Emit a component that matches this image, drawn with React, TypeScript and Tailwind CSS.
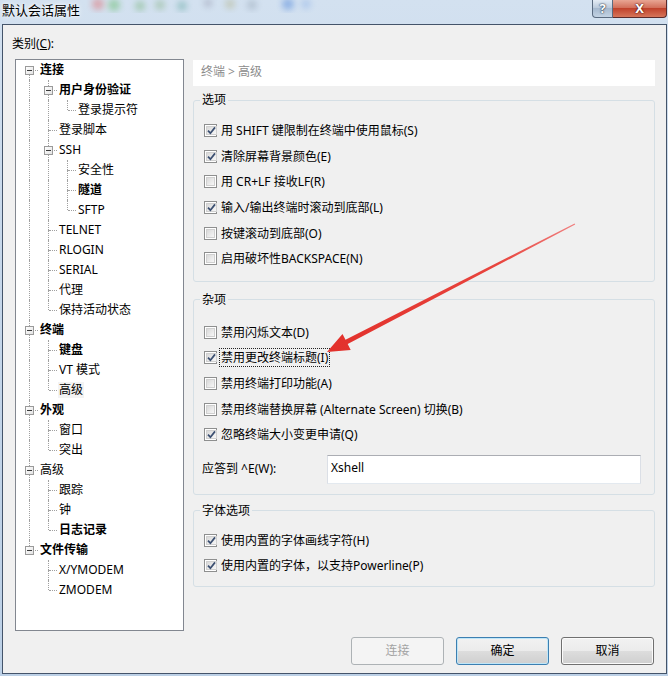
import React from 'react'

type Node = [string, number, boolean, boolean]

const tree: Node[] = [
  ['连接', 0, true, true],
  ['用户身份验证', 1, true, true],
  ['登录提示符', 2, false, false],
  ['登录脚本', 1, false, false],
  ['SSH', 1, false, true],
  ['安全性', 2, false, false],
  ['隧道', 2, true, false],
  ['SFTP', 2, false, false],
  ['TELNET', 1, false, false],
  ['RLOGIN', 1, false, false],
  ['SERIAL', 1, false, false],
  ['代理', 1, false, false],
  ['保持活动状态', 1, false, false],
  ['终端', 0, true, true],
  ['键盘', 1, true, false],
  ['VT 模式', 1, false, false],
  ['高级', 1, false, false],
  ['外观', 0, true, true],
  ['窗口', 1, false, false],
  ['突出', 1, false, false],
  ['高级', 0, false, true],
  ['跟踪', 1, false, false],
  ['钟', 1, false, false],
  ['日志记录', 1, true, false],
  ['文件传输', 0, true, true],
  ['X/YMODEM', 1, false, false],
  ['ZMODEM', 1, false, false],
]

function hasNext(i: number) {
  const lv = tree[i][1]
  for (let j = i + 1; j < tree.length; j++) {
    if (tree[j][1] < lv) return false
    if (tree[j][1] === lv) return true
  }
  return false
}

function TreeRow({ i }: { i: number }) {
  const [label, level, bold, expander] = tree[i]
  const cols = []
  for (let c = 0; c <= level; c++) {
    let cont = false
    if (c < level) {
      for (let k = i - 1; k >= 0; k--) {
        if (tree[k][1] === c) {
          cont = hasNext(k)
          break
        }
      }
    }
    cols.push(
      <div key={c} className="relative w-[19px] h-full shrink-0">
        {c < level && cont && (
          <span className="absolute left-[9px] top-0 bottom-0 border-l border-dotted border-[#a0a0a0]" />
        )}
        {c === level && (
          <>
            {i !== 0 && (
              <span className="absolute left-[9px] top-0 h-[10px] border-l border-dotted border-[#a0a0a0]" />
            )}
            {hasNext(i) && (
              <span className="absolute left-[9px] top-[10px] bottom-0 border-l border-dotted border-[#a0a0a0]" />
            )}
            <span className="absolute left-[10px] right-[1px] top-[10px] border-t border-dotted border-[#a0a0a0]" />
            {expander && (
              <span className="absolute left-[5px] top-[6px] w-[9px] h-[9px] border border-[#9a9a9a] bg-[linear-gradient(135deg,#ffffff,#e2e2e2)] flex items-center justify-center">
                <span className="w-[5px] h-[1px] bg-[#3a3a3a]" />
              </span>
            )}
          </>
        )}
      </div>
    )
  }
  const selected = i === 16
  return (
    <div className="flex h-[20px] items-center pl-[4px]">
      {cols}
      <span
        className={`px-[1px] leading-[16px] whitespace-nowrap text-black ${bold ? 'font-bold' : ''} ${selected ? 'bg-[#f3f3f3]' : ''}`}
      >
        {label}
      </span>
    </div>
  )
}

function Check({ checked }: { checked: boolean }) {
  return (
    <span className="w-[13px] h-[13px] shrink-0 border border-[#8e8f8f] bg-white p-[1px] flex">
      <span className="flex-1 border border-[#d0d0d0] bg-[linear-gradient(135deg,#d9d9d9,#f7f7f7)] flex items-center justify-center">
        {checked && (
          <svg width="9" height="9" viewBox="0 0 9 9">
            <path d="M1 4.6 L3.4 7.2 L8 1.4" fill="none" stroke="#3b4f71" strokeWidth="1.7" />
          </svg>
        )}
      </span>
    </span>
  )
}

function Row({ checked, label, focus }: { checked: boolean; label: string; focus?: boolean }) {
  return (
    <div className="h-[25.6px] flex items-center gap-[2px]">
      <Check checked={checked} />
      <span
        className={`leading-[17px] whitespace-nowrap px-[1px] ${focus ? 'border border-dotted border-[#222]' : 'border border-transparent'}`}
      >
        {label}
      </span>
    </div>
  )
}

function Group({ title, children, className }: { title: string; children: React.ReactNode; className?: string }) {
  return (
    <fieldset className={`border border-[#d5dfe5] rounded-[3px] pl-[10px] pr-[10px] ${className ?? ''}`}>
      <legend className="ml-[-4px] px-[2px] leading-[16px]">{title}</legend>
      {children}
    </fieldset>
  )
}

function Btn({ label, kind }: { label: string; kind: 'normal' | 'default' | 'disabled' }) {
  const cls =
    kind === 'disabled'
      ? 'border-[#adb2b5] bg-[#f4f4f4] text-[#a3a3a3]'
      : kind === 'default'
        ? 'border-[#3c7fb1] bg-[linear-gradient(#f2f2f2_0%,#ebebeb_50%,#dddddd_50%,#cfcfcf_100%)] shadow-[inset_0_0_0_1px_#bfe6f8] text-black'
        : 'border-[#707070] bg-[linear-gradient(#f2f2f2_0%,#ebebeb_50%,#dddddd_50%,#cfcfcf_100%)] shadow-[inset_0_0_0_1px_#fbfbfb] text-black'
  return (
    <div className={`w-[93px] h-[28px] rounded-[3px] border flex items-center justify-center ${cls}`}>{label}</div>
  )
}

export default function App() {
  return (
    <div className="relative w-[668px] h-[676px] flex flex-col bg-[linear-gradient(180deg,#d3e1f0,#c6d7ea_40%,#bcd0e6)] overflow-hidden font-['Noto_Sans','Noto_Sans_CJK_SC',sans-serif] text-[12px] text-black">
      {/* title bar */}
      <div className="relative h-[24px] shrink-0 flex items-start">
        <svg className="absolute left-0 top-0" width="668" height="24">
          <defs>
            <filter id="bl">
              <feGaussianBlur stdDeviation="3" />
            </filter>
          </defs>
          <g filter="url(#bl)" opacity="0.45">
            <circle cx="98" cy="4" r="6" fill="#e06060" />
            <circle cx="114" cy="5" r="6" fill="#58b85a" />
            <circle cx="140" cy="6" r="5" fill="#6cae6a" />
            <circle cx="160" cy="5" r="5" fill="#7fae7a" />
            <circle cx="182" cy="6" r="5" fill="#5aa39a" />
            <circle cx="208" cy="3" r="4" fill="#8a8aa0" />
            <circle cx="230" cy="4" r="5" fill="#b0b080" />
            <circle cx="252" cy="5" r="5" fill="#90a0b0" />
            <circle cx="288" cy="4" r="6" fill="#3d7ad8" />
            <circle cx="306" cy="4" r="5" fill="#8ab0e8" />
          </g>
        </svg>
        <span className="relative ml-[2px] mt-[1px] leading-[18px] text-[13px] [text-shadow:0_0_6px_#ffffff,0_0_3px_#ffffff]">
          默认会话属性
        </span>
        <div className="ml-auto mr-[1px] flex relative">
          <div className="w-[21px] h-[18px] rounded-bl-[4px] border border-t-0 border-[#5a6b80] bg-[linear-gradient(#e4ecf5,#b8c8da_50%,#a6b9cf_50%,#c3d3e4)] flex items-center justify-center text-white font-bold text-[13px] [text-shadow:0_0_2px_#1d2b3d,0_0_1px_#1d2b3d]">
            ?
          </div>
          <div className="w-[54px] h-[18px] rounded-br-[4px] border border-t-0 border-l-0 border-[#5a2a2a] bg-[linear-gradient(#e8a593,#d06a55_50%,#c0422c_50%,#d6755a)] flex items-center justify-center text-white font-bold text-[13px] [text-shadow:0_0_2px_#4a1010,0_0_1px_#4a1010]">
            X
          </div>
        </div>
      </div>

      {/* body */}
      <div className="flex-1 ml-[2px] mr-[1px] mb-[2px] border border-[#44546a] bg-[#f0f0f0] flex flex-col">
        <div className="flex pt-[11px] pl-[9px] gap-[9px]">
          <div className="w-[172px] flex flex-col">
            <div className="leading-[16px]">
              类别(<span className="underline">C</span>):
            </div>
            <div className="mt-[7px] ml-[3px] w-[169px] h-[572px] border border-[#828790] bg-white pt-0">
              {tree.map((_, i) => (
                <TreeRow key={i} i={i} />
              ))}
            </div>
          </div>

          <div className="w-[462px] mt-[24px] flex flex-col">
            <div className="h-[26px] bg-white flex items-center pl-[8px] text-[#8c8c8c] pb-[2px]">终端 &gt; 高级</div>

            <Group title="选项" className="mt-[6px] pt-[10px] pb-[9px]">
              <Row checked label="用 SHIFT 键限制在终端中使用鼠标(S)" />
              <Row checked label="清除屏幕背景颜色(E)" />
              <Row checked={false} label="用 CR+LF 接收LF(R)" />
              <Row checked label="输入/输出终端时滚动到底部(L)" />
              <Row checked={false} label="按键滚动到底部(O)" />
              <Row checked={false} label="启用破坏性BACKSPACE(N)" />
            </Group>

            <Group title="杂项" className="mt-[10px] pt-[12px] pb-[10px]">
              <Row checked={false} label="禁用闪烁文本(D)" />
              <Row checked focus label="禁用更改终端标题(I)" />
              <Row checked={false} label="禁用终端打印功能(A)" />
              <Row checked={false} label="禁用终端替换屏幕 (Alternate Screen) 切换(B)" />
              <Row checked label="忽略终端大小变更申请(Q)" />
              <div className="mt-[7px] flex items-center">
                <span className="w-[125px] -ml-[2px] leading-[16px]">应答到 ^E(W):</span>
                <div className="w-[314px] h-[29px] border border-[#dbdfe6] border-t-[#abadb3] border-b-[#e3e9ef] bg-white pl-[3px] pt-[4px] leading-[16px]">
                  Xshell
                </div>
              </div>
            </Group>

            <Group title="字体选项" className="mt-[8px] pt-[9px] pb-[7px]">
              <Row checked label="使用内置的字体画线字符(H)" />
              <Row checked label="使用内置的字体，以支持Powerline(P)" />
            </Group>
          </div>
        </div>

        <div className="mt-[6px] flex justify-end gap-[12px] pr-[12px]">
          <Btn label="连接" kind="disabled" />
          <Btn label="确定" kind="default" />
          <Btn label="取消" kind="normal" />
        </div>
      </div>

      {/* red annotation arrow */}
      <svg className="absolute left-0 top-0 pointer-events-none" width="668" height="676">
        <defs>
          <linearGradient id="arr" x1="575" y1="224" x2="327" y2="352" gradientUnits="userSpaceOnUse">
            <stop offset="0" stopColor="#f08080" />
            <stop offset="0.3" stopColor="#e8453e" />
            <stop offset="1" stopColor="#e2302b" />
          </linearGradient>
        </defs>
        <polygon
          points="574.6,223.6 345.5,339.7 342.5,333.9 327,352 350.7,349.9 347.7,344.1 575.2,224.6"
          fill="url(#arr)"
        />
      </svg>
    </div>
  )
}
